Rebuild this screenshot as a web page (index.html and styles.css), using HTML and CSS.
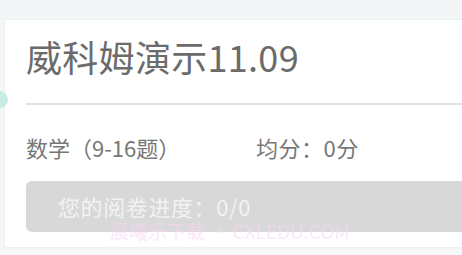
FILE: index.html
```html
<!DOCTYPE html>
<html lang="zh">
<head>
<meta charset="utf-8">
<link rel="stylesheet" href="styles.css">
</head>
<body>
<div class="page">
  <div class="dot"></div>
  <div class="card">
    <div class="title">威科姆演示11.09</div>
    <div class="divider"></div>
    <div class="row">
      <span class="subject">数学（9-16题）</span>
      <span class="avg">均分：0分</span>
    </div>
    <div class="bar">您的阅卷进度：0/0</div>
  </div>
  <div class="watermark">晨曦乐下载 · CXLEDU.COM</div>
</div>
</body>
</html>
```
FILE: styles.css
```css
html, body {
  margin: 0;
  padding: 0;
}
body {
  background: #f7f8f9;
  font-family: "Noto Sans CJK SC", "Noto Sans", sans-serif;
  width: 462px;
  height: 255px;
  overflow: hidden;
}
.page {
  position: relative;
  padding-top: 19px;
  height: 236px;
  background: linear-gradient(#f3f5f6, #f6f7f8);
}
.dot {
  position: absolute;
  left: -9px;
  top: 91px;
  width: 17px;
  height: 17px;
  border-radius: 50%;
  background: #c6ece4;
}
.card {
  margin-left: 4px;
  height: 229px;
  background: #fff;
  border-top: 1px solid #e3f1f0;
  border-left: 1px solid #eeeeee;
  border-bottom: 1px solid #f0f0f0;
  padding-left: 21px;
  box-sizing: border-box;
}
.title {
  padding-top: 11px;
  font-size: 36px;
  line-height: 50px;
  color: #6b6b6b;
  letter-spacing: 0.3px;
  white-space: nowrap;
}
.divider {
  margin-top: 22px;
  height: 2px;
  background: #e2e2e2;
}
.row {
  margin-top: 27px;
  display: flex;
  font-size: 22px;
  line-height: 30px;
  color: #777;
  white-space: nowrap;
}
.subject {
  width: 230px;
}
.avg {
  letter-spacing: 0.5px;
}
.bar {
  margin-top: 19px;
  height: 51px;
  border-radius: 6px 0 0 6px;
  background: #d8d8d8;
  color: #f2f2f2;
  font-size: 22px;
  line-height: 51px;
  padding-left: 32px;
  letter-spacing: 0.6px;
  white-space: nowrap;
}
.watermark {
  position: absolute;
  left: 110px;
  top: 219px;
  font-size: 19px;
  line-height: 24px;
  color: rgba(248, 215, 245, 0.6);
  white-space: nowrap;
}
```
